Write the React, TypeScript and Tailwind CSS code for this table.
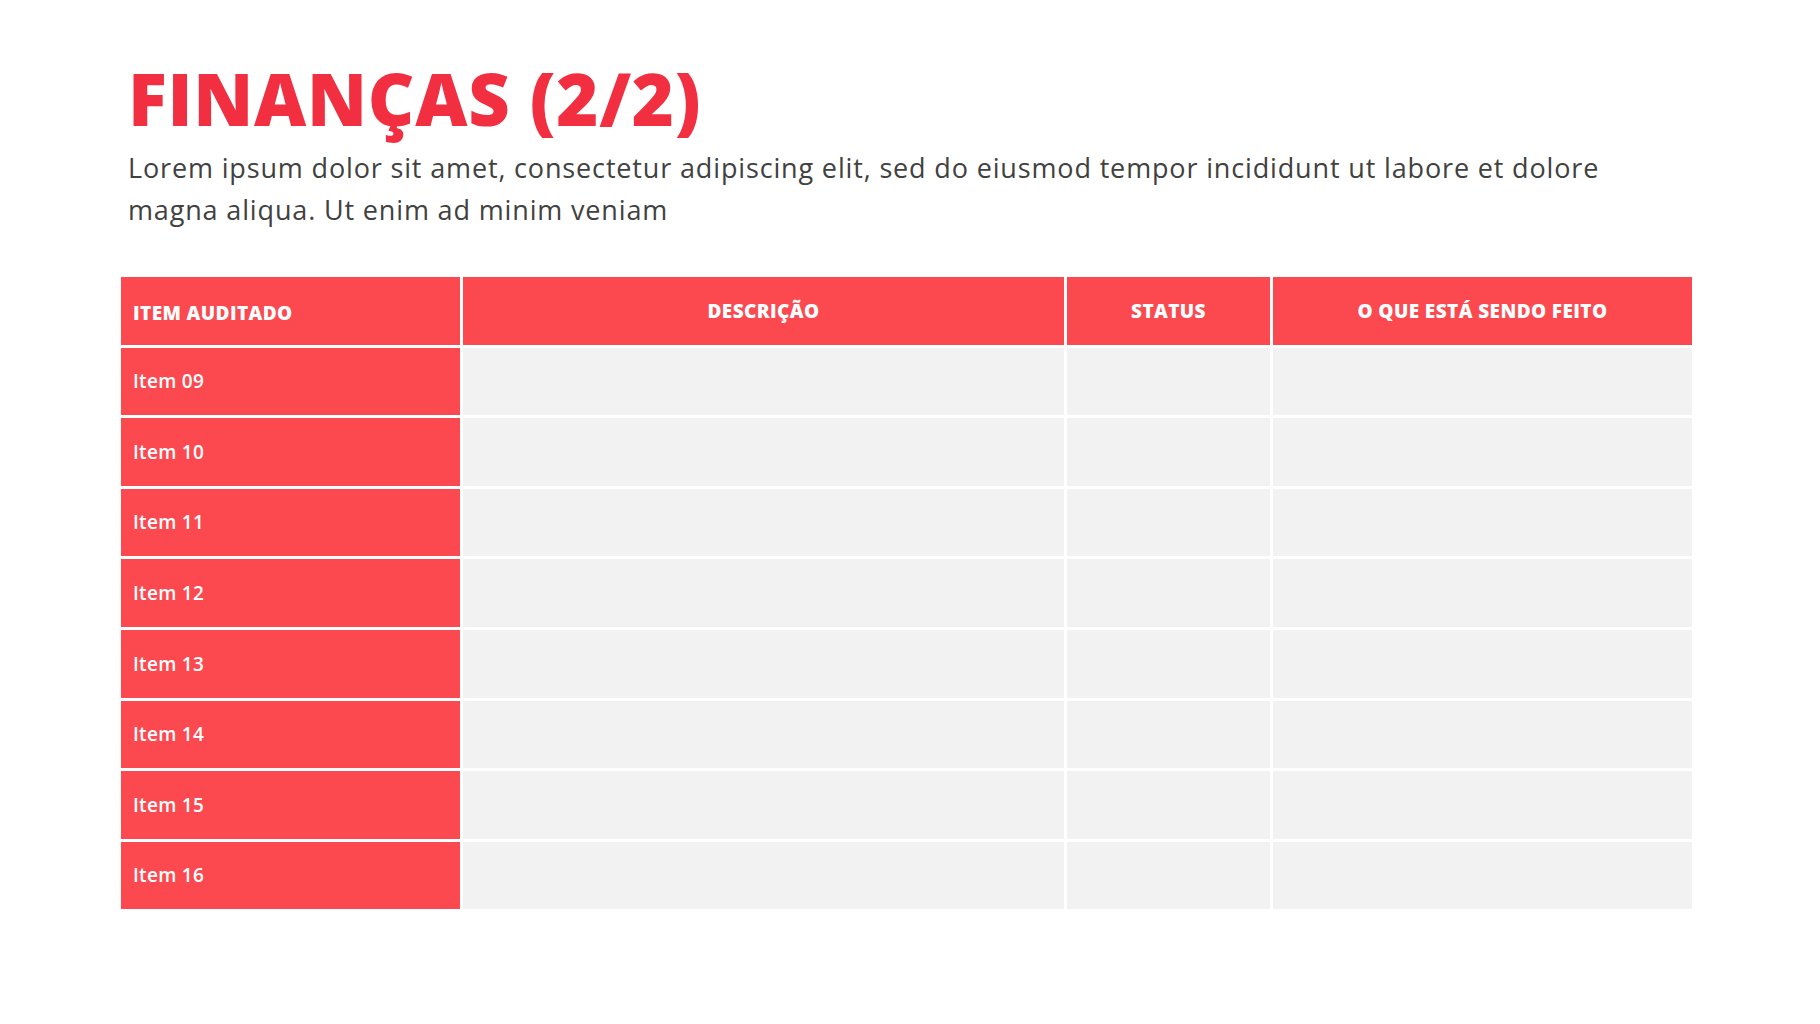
const rows = ["Item 09", "Item 10", "Item 11", "Item 12", "Item 13", "Item 14", "Item 15", "Item 16"];

const headers = ["DESCRIÇÃO", "STATUS", "O QUE ESTÁ SENDO FEITO"];

export default function App() {
  return (
    <div className="h-[1024px] w-[1820px] bg-white font-['Open_Sans',sans-serif]">
      <header className="pl-[128px] pt-[53px]">
        <h1 className="text-[72px] font-extrabold leading-[90px] tracking-[0.7px] text-[#f22f41]">
          FINANÇAS (2/2)
        </h1>
        <p className="mt-[4px] w-[1520px] text-[27px] font-medium leading-[42px] tracking-[0.85px] text-[#414141]">
          Lorem ipsum dolor sit amet, consectetur adipiscing elit, sed do eiusmod tempor incididunt ut labore et dolore
          magna aliqua. Ut enim ad minim veniam
        </p>
      </header>

      <section className="ml-[121px] mt-[46px] grid w-[1571px] grid-cols-[339px_601px_203px_419px] auto-rows-[67.6px] gap-[3px]">
        <div className="flex items-center bg-[#fc4950] pl-[12px] pt-[5px] text-[19px] font-extrabold tracking-[0.4px] text-white">
          ITEM AUDITADO
        </div>
        {headers.map((h) => (
          <div
            key={h}
            className="flex items-center justify-center bg-[#fc4950] pt-[1px] text-[19px] font-extrabold tracking-[0.4px] text-white"
          >
            {h}
          </div>
        ))}
        {rows.map((r) => (
          <Row key={r} label={r} />
        ))}
      </section>
    </div>
  );
}

function Row({ label }: { label: string }) {
  return (
    <>
      <div className="flex items-center bg-[#fc4950] pl-[12px] text-[19px] font-semibold tracking-[0.3px] text-white">
        {label}
      </div>
      <div className="bg-[#f2f2f2]" />
      <div className="bg-[#f2f2f2]" />
      <div className="bg-[#f2f2f2]" />
    </>
  );
}
